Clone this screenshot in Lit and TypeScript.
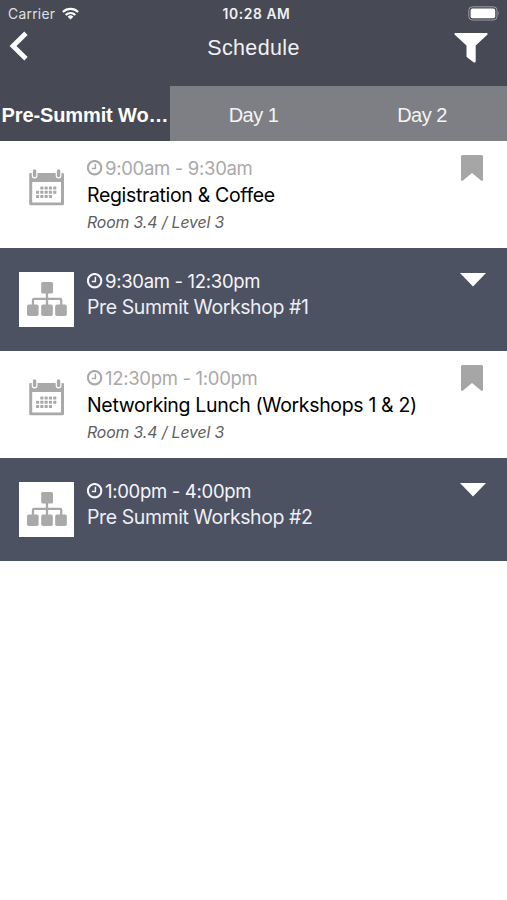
import { LitElement, html, css, svg } from "lit";
import { customElement, property } from "lit/decorators.js";
import { classMap } from "lit/directives/class-map.js";

interface Session {
  kind: "event" | "group";
  time: string;
  title: string;
  room?: string;
}

const sessions: Session[] = [
  { kind: "event", time: "9:00am - 9:30am", title: "Registration & Coffee", room: "Room 3.4 / Level 3" },
  { kind: "group", time: "9:30am - 12:30pm", title: "Pre Summit Workshop #1" },
  { kind: "event", time: "12:30pm - 1:00pm", title: "Networking Lunch (Workshops 1 & 2)", room: "Room 3.4 / Level 3" },
  { kind: "group", time: "1:00pm - 4:00pm", title: "Pre Summit Workshop #2" },
];

const calendarDots = [
  [12, 17.4], [16.3, 17.4], [20.6, 17.4], [24.9, 17.4],
  [7.7, 21.7], [12, 21.7], [16.3, 21.7], [20.6, 21.7], [24.9, 21.7],
  [7.7, 26], [12, 26], [16.3, 26], [20.6, 26],
];

const calendarIcon = html`<svg width="36" height="37" viewBox="0 0 36 37">
  <path fill="#a9a9a9" fill-rule="evenodd" d="M1.500 4H33.800a1.200 1.200 0 0 1 1.200 1.200V34.800a1.500 1.500 0 0 1-1.500 1.500H1.700A1.500 1.500 0 0 1 .2 34.800V5.200A1.200 1.200 0 0 1 1.500 4ZM3.200 13V33.400H32V13Z"/>
  <g fill="#a9a9a9" stroke="#fff" stroke-width="1.200">
    <rect x="3.300" y="-.4" width="4.600" height="9.200" rx="2.300"/>
    <rect x="27.300" y="-.4" width="4.600" height="9.200" rx="2.300"/>
  </g>
  ${calendarDots.map(([x, y]) => svg`<rect x=${x - 0.7} y=${y} width="3.1" height="3.1" rx=".6" fill="#a9a9a9"/>`)}
</svg>`;

const hierarchyIcon = html`<svg width="40" height="35" viewBox="0 0 40 35" fill="#a9a9a9">
  <rect x="14.200" y="0" width="11.800" height="11.500" rx="1.500"/>
  <path fill="none" stroke="#a9a9a9" stroke-width="2.300" d="M20 11V23M6 23V18Q6 16.800 7.200 16.800H33Q34.200 16.800 34.200 18V23"/>
  <rect x="0" y="22.500" width="11.600" height="11.500" rx="1.800"/>
  <rect x="14.200" y="22.500" width="11.600" height="11.500" rx="1.800"/>
  <rect x="28.200" y="22.500" width="11.600" height="11.500" rx="1.800"/>
</svg>`;

const clockIcon = html`<svg class="clock" width="16" height="16" viewBox="0 0 16 16" fill="none" stroke="currentColor">
  <circle cx="7.600" cy="7.700" r="6.700" stroke-width="2.100"/>
  <path stroke-width="1.500" d="M8.400 3.800V8.400H4.800"/>
</svg>`;

@customElement("session-row")
class SessionRow extends LitElement {
  @property({ attribute: false }) session!: Session;

  static styles = css`
    :host { display: block; }
    .row {
      box-sizing: border-box;
      display: grid;
      grid-template-columns: 87px 1fr auto;
      align-items: start;
      height: 107px;
      background: #fff;
      color: #000;
    }
    .group { height: 103px; background: #4d5262; color: #eceef6; }
    .icon { display: flex; padding: 28px 0 0 29px; }
    .group .icon { padding: 24px 0 0 19px; }
    .tile {
      display: flex;
      align-items: center;
      justify-content: center;
      width: 55px;
      height: 55px;
      background: #fff;
    }
    .text { padding-top: 13.500px; font-size: 19.500px; line-height: 27px; letter-spacing: -.37px; white-space: nowrap; }
    .group .text { padding-top: 19.600px; }
    .time { display: flex; align-items: center; gap: 2px; height: 27px; font-size: 18.500px; letter-spacing: -.31px; color: #a9a9a9; }
    .group .time { height: 26px; line-height: 26px; color: #f5f6fb; }
    .title { height: 27px; }
    .event .title { letter-spacing: -.34px; }
    .group .title { letter-spacing: -.41px; }
    .room { height: 27px; font-size: 15.800px; letter-spacing: -.12px; font-style: italic; color: #5e5e5e; }
    .clock { display: block; flex: none; }
    .action { display: flex; padding: 13.500px 24px 0 0; }
    .group .action { padding: 25px 21px 0 0; }
  `;

  render() {
    const s = this.session;
    const group = s.kind === "group";
    return html`<div class=${classMap({ row: true, group, event: !group })}>
      <div class="icon">${group ? html`<div class="tile">${hierarchyIcon}</div>` : calendarIcon}</div>
      <div class="text">
        <div class="time">${clockIcon}<span>${s.time}</span></div>
        <div class="title"><span>${s.title}</span></div>
        ${s.room ? html`<div class="room"><span>${s.room}</span></div>` : ""}
      </div>
      <div class="action">
        ${group
          ? html`<svg width="26" height="14" viewBox="0 0 26 14"><path fill="#fff" d="M0 0H26L13 13.500Z"/></svg>`
          : html`<svg width="22" height="27" viewBox="0 0 22 27"><path fill="#a6a6a6" d="M1.500 0H20.500Q22 0 22 1.500V25Q21.500 26.500 20 25.500L11 18 2 25.500Q.5 26.500 0 25V1.500Q0 0 1.500 0Z"/></svg>`}
      </div>
    </div>`;
  }
}

@customElement("app-root")
class AppRoot extends LitElement {
  static styles = css`
    :host {
      display: block;
      height: 900px;
      background: #fff;
      overflow: hidden;
      font-family: Inter, "Liberation Sans", sans-serif;
    }
    .header { height: 86px; background: #474954; color: #f0f1f5; }
    .status {
      display: grid;
      grid-template-columns: 1fr auto 1fr;
      align-items: center;
      height: 27px;
      padding: 0 6px 0 8px;
      font-size: 13.800px;
    }
    .carrier { display: flex; align-items: center; gap: 7px; letter-spacing: .3px; color: #dfe0e5; }
    .clock { font-weight: 600; letter-spacing: .6px; padding-left: 4px; }
    .battery { display: flex; justify-content: flex-end; }
    .nav {
      display: grid;
      grid-template-columns: 1fr auto 1fr;
      align-items: center;
      height: 42px;
      padding: 0 19px 0 9px;
    }
    .back { padding-bottom: 4px; }
    .heading { font-family: "Liberation Sans", sans-serif; font-size: 21.500px; letter-spacing: .35px; padding-left: 10px; }
    .filter { display: flex; justify-content: flex-end; }
    .nav svg, .status svg { display: block; }
    .tabs {
      display: grid;
      grid-template-columns: 170px 167px 170px;
      height: 55px;
      background: #7e7f84;
      color: #f4f4f6;
      font-family: "Liberation Sans", sans-serif;
      font-size: 20px;
      line-height: 58px;
      letter-spacing: -.5px;
      text-align: center;
    }
    .tab { white-space: nowrap; overflow: hidden; }
    .active { background: #474954; color: #fff; font-weight: 700; letter-spacing: -.12px; }
  `;

  render() {
    return html`
      <div class="header">
        <div class="status">
          <div class="carrier">
            <span>Carrier</span>
            <svg width="17" height="13" viewBox="0 0 17 13" fill="none" stroke="#fff" stroke-width="2.200">
              <path d="M.9 5A10.800 10.800 0 0 1 16.100 5"/>
              <path d="M3.700 8A6.800 6.800 0 0 1 13.300 8"/>
              <path fill="#fff" stroke="none" d="M8.500 12.500 5.600 9.700A4.200 4.200 0 0 1 11.400 9.700Z"/>
            </svg>
          </div>
          <div class="clock"><span>10:28 AM</span></div>
          <div class="battery">
            <svg width="33" height="15" viewBox="0 0 33 15">
              <rect x=".8" y=".8" width="28.200" height="13.200" rx="3.500" fill="none" stroke="#9b9ca3"/>
              <rect x="2.600" y="2.600" width="24.600" height="9.600" rx="1.800" fill="#fff"/>
              <path d="M30.400 5.200Q32.200 7.400 30.400 9.600Z" fill="#9b9ca3"/>
            </svg>
          </div>
        </div>
        <div class="nav">
          <div class="back">
            <svg width="20" height="30" viewBox="0 0 20 30"><path d="M17 2.300 4 15 17 27.700" fill="none" stroke="#fff" stroke-width="4.800"/></svg>
          </div>
          <div class="heading"><span>Schedule</span></div>
          <div class="filter">
            <svg width="34" height="30" viewBox="0 0 34 30"><path fill="#fff" d="M1 0H33Q34.200 .8 33 2L21.700 12.500V28.500Q21.200 30 19.500 29.300L13 24.200Q12.500 23.700 12.500 23V12.500L1 2Q-.2 .8 1 0Z"/></svg>
          </div>
        </div>
      </div>
      <div class="tabs">
        <div class="tab active"><span>Pre-Summit Wo…</span></div>
        <div class="tab"><span>Day 1</span></div>
        <div class="tab"><span>Day 2</span></div>
      </div>
      ${sessions.map((s) => html`<session-row .session=${s}></session-row>`)}
    `;
  }
}
